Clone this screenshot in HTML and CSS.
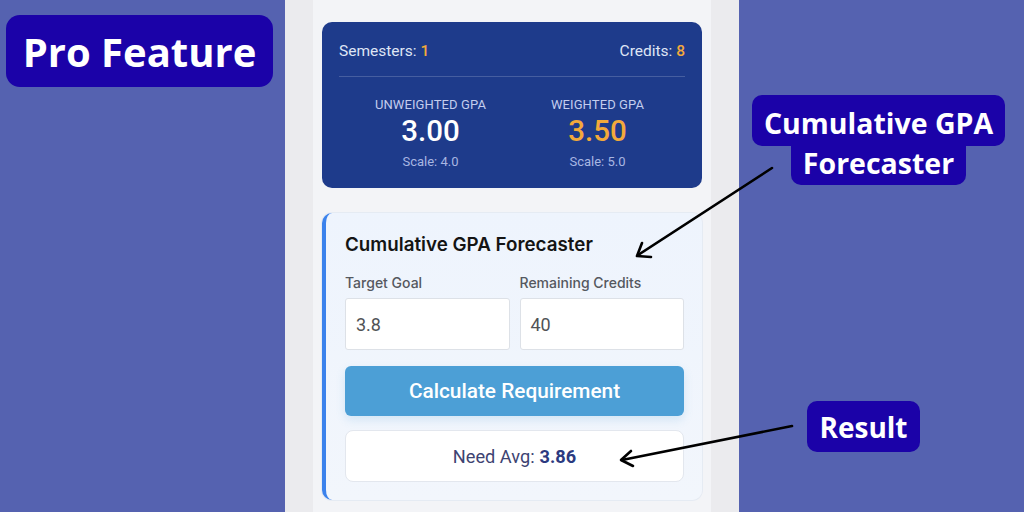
FILE: index.html
```html
<!DOCTYPE html>
<html lang="en">
<head>
<meta charset="utf-8">
<title>Pro Feature – Cumulative GPA Forecaster</title>
<link rel="stylesheet" href="styles.css">
</head>
<body>
<main class="stage">
  <section class="phone">
    <div class="screen">
      <div class="summary">
        <div class="summary-top">
          <span>Semesters: <b class="accent">1</b></span>
          <span>Credits: <b class="accent">8</b></span>
        </div>
        <div class="summary-gpas">
          <div class="gpa">
            <div class="gpa-label">UNWEIGHTED GPA</div>
            <div class="gpa-value">3.00</div>
            <div class="gpa-scale">Scale: 4.0</div>
          </div>
          <div class="gpa">
            <div class="gpa-label">WEIGHTED GPA</div>
            <div class="gpa-value accent">3.50</div>
            <div class="gpa-scale">Scale: 5.0</div>
          </div>
        </div>
      </div>

      <div class="forecast">
        <h2 class="forecast-title">Cumulative GPA Forecaster</h2>
        <div class="fields">
          <label class="field">
            <span class="field-label">Target Goal</span>
            <span class="field-input">3.8</span>
          </label>
          <label class="field">
            <span class="field-label">Remaining Credits</span>
            <span class="field-input">40</span>
          </label>
        </div>
        <button class="calc-btn">Calculate Requirement</button>
        <div class="result">Need Avg: <b>3.86</b></div>
      </div>
    </div>
  </section>

  <div class="tag tag-pro">Pro Feature</div>
  <div class="tag-stack">
    <span class="tag tag-line1">Cumulative GPA</span>
    <span class="tag tag-line2">Forecaster</span>
  </div>
  <div class="tag tag-result">Result</div>

  <svg class="arrows" width="1024" height="512" viewBox="0 0 1024 512">
    <g fill="none" stroke="#000" stroke-width="2.6" stroke-linecap="round" stroke-linejoin="round">
      <line x1="772" y1="168" x2="638" y2="255"/>
      <polyline points="642,243 637,256 651,257"/>
      <line x1="792" y1="426" x2="622" y2="460"/>
      <polyline points="631,451 621,460 633,466"/>
    </g>
  </svg>
</main>
</body>
</html>
```

FILE: styles.css
```css
* { box-sizing: border-box; }

html, body {
  margin: 0;
  padding: 0;
}

body {
  width: 1024px;
  height: 512px;
  overflow: hidden;
  background: #5562b0;
  font-family: Roboto, "Liberation Sans", sans-serif;
}

.stage {
  position: relative;
  width: 1024px;
  height: 512px;
  display: flex;
  justify-content: center;
}

.phone {
  width: 454px;
  height: 512px;
  background: #ebebee;
  padding: 0 28px 0 28px;
}

.screen {
  height: 100%;
  background: #f3f4f7;
  padding: 22px 9px 0 9px;
  display: flex;
  flex-direction: column;
  gap: 25px;
}

/* summary card */
.summary {
  height: 166px;
  background: #1e3b8b;
  border-radius: 10px;
  padding: 0 17px;
  color: #dfe5f5;
}

.summary-top {
  display: flex;
  justify-content: space-between;
  align-items: center;
  height: 55px;
  padding-top: 4px;
  font-size: 15.5px;
  border-bottom: 1px solid rgba(255, 255, 255, 0.18);
}

.summary-top b { font-weight: 500; }

.accent { color: #f2a93b; }

.summary-gpas {
  display: grid;
  grid-template-columns: 1fr 1fr;
  padding: 20px 4px 0 8px;
  text-align: center;
}

.gpa-label {
  font-size: 13px;
  color: #c3cdee;
  letter-spacing: 0.1px;
  line-height: 16px;
}

.gpa-value {
  font-size: 29.5px;
  font-weight: 500;
  color: #ffffff;
  line-height: 36px;
}

.gpa-value.accent { color: #f2a93b; }

.gpa-scale {
  font-size: 13px;
  color: #a8b6e2;
  line-height: 16px;
  margin-top: 5px;
}

/* forecaster card */
.forecast {
  height: 287px;
  background: linear-gradient(180deg, #eef4fd 0%, #f2f6fc 100%);
  border-left: 4px solid #3b82ec;
  border-radius: 10px;
  padding: 21px 18px 0 19px;
  box-shadow: 0 0 0 1px rgba(220, 228, 240, 0.6);
}

.forecast-title {
  margin: 0;
  font-family: Inter, "Noto Sans", sans-serif;
  font-size: 18.8px;
  font-weight: 600;
  line-height: 22px;
  color: #141414;
}

.fields {
  display: grid;
  grid-template-columns: 1fr 1fr;
  gap: 10px;
  margin-top: 18px;
}

.field {
  display: flex;
  flex-direction: column;
  gap: 6px;
}

.field-label {
  font-family: Inter, "Noto Sans", sans-serif;
  font-size: 14px;
  font-weight: 500;
  color: #555860;
  line-height: 18px;
}

.field-input {
  display: flex;
  align-items: center;
  height: 52px;
  padding: 0 10px;
  background: #ffffff;
  border: 1px solid #dde1e7;
  border-radius: 3px;
  font-size: 18px;
  color: #505256;
}

.calc-btn {
  display: block;
  width: 100%;
  height: 50px;
  margin-top: 16px;
  border: none;
  border-radius: 6px;
  background: #4c9fd6;
  color: #ffffff;
  font-family: Roboto, "Liberation Sans", sans-serif;
  font-size: 20.8px;
  font-weight: 500;
  box-shadow: 0 4px 10px rgba(76, 159, 214, 0.18);
}

.result {
  height: 52px;
  margin-top: 14px;
  display: flex;
  align-items: center;
  justify-content: center;
  gap: 5px;
  background: #ffffff;
  border: 1px solid #e3e7ee;
  border-radius: 8px;
  font-size: 18.2px;
  color: #3d4372;
}

.result b {
  color: #2b3a80;
  font-weight: 700;
}

/* annotation tags */
.tag {
  position: absolute;
  background: #1b02a8;
  color: #ffffff;
  font-family: "Open Sans", "Noto Sans", sans-serif;
  font-weight: 700;
  display: flex;
  align-items: center;
  justify-content: center;
  white-space: nowrap;
}

.tag-pro {
  left: 6px;
  top: 15px;
  width: 267px;
  height: 72px;
  border-radius: 14px;
  font-size: 40px;
}

.tag-stack {
  position: absolute;
  left: 752px;
  top: 95px;
  width: 253px;
  display: flex;
  flex-direction: column;
  align-items: center;
}

.tag-stack .tag {
  position: static;
  font-size: 28.5px;
}

.tag-line1 {
  width: 253px;
  height: 51px;
  padding-top: 4px;
  border-radius: 10px;
}

.tag-line2 {
  width: 175px;
  height: 39px;
  padding-bottom: 6px;
  border-radius: 0 0 10px 10px;
}

.tag-result {
  left: 807px;
  top: 401px;
  width: 113px;
  height: 51px;
  border-radius: 10px;
  font-size: 28px;
}

.arrows {
  position: absolute;
  left: 0;
  top: 0;
  pointer-events: none;
}
```
